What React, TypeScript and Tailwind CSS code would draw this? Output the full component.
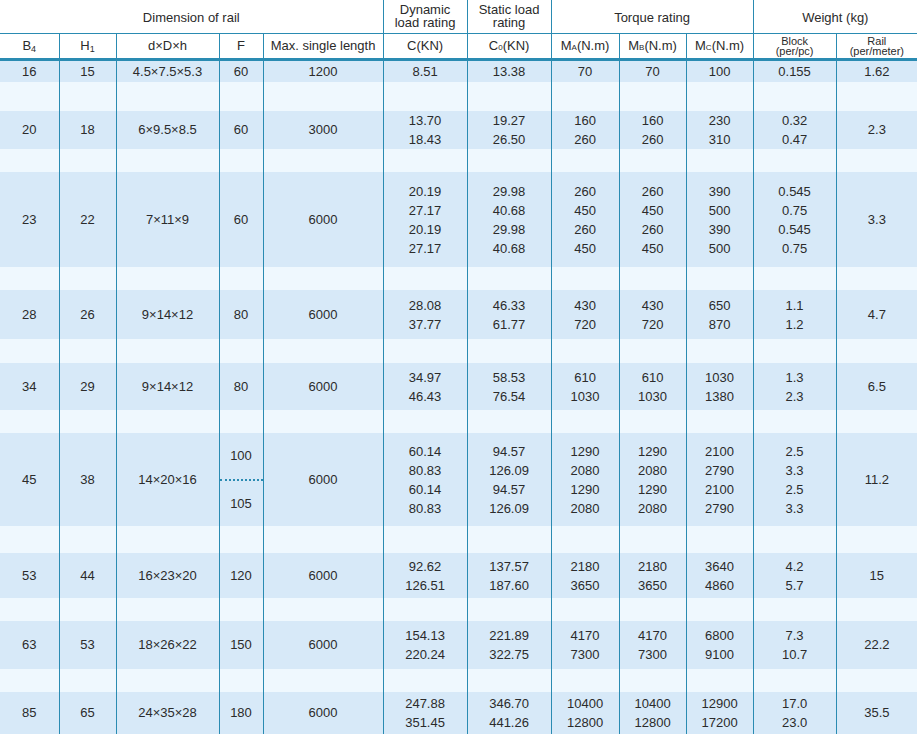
import React from "react";

type Row = {
  b: string;
  h: string;
  d: string;
  f: string[];
  len: string;
  c: string[];
  c0: string[];
  ma: string[];
  mb: string[];
  mc: string[];
  block: string[];
  rail: string;
  height: number;
  gap: number;
};

const rows: Row[] = [
  { b: "16", h: "15", d: "4.5×7.5×5.3", f: ["60"], len: "1200", c: ["8.51"], c0: ["13.38"], ma: ["70"], mb: ["70"], mc: ["100"], block: ["0.155"], rail: "1.62", height: 23, gap: 29 },
  { b: "20", h: "18", d: "6×9.5×8.5", f: ["60"], len: "3000", c: ["13.70", "18.43"], c0: ["19.27", "26.50"], ma: ["160", "260"], mb: ["160", "260"], mc: ["230", "310"], block: ["0.32", "0.47"], rail: "2.3", height: 37, gap: 23 },
  { b: "23", h: "22", d: "7×11×9", f: ["60"], len: "6000", c: ["20.19", "27.17", "20.19", "27.17"], c0: ["29.98", "40.68", "29.98", "40.68"], ma: ["260", "450", "260", "450"], mb: ["260", "450", "260", "450"], mc: ["390", "500", "390", "500"], block: ["0.545", "0.75", "0.545", "0.75"], rail: "3.3", height: 95, gap: 23 },
  { b: "28", h: "26", d: "9×14×12", f: ["80"], len: "6000", c: ["28.08", "37.77"], c0: ["46.33", "61.77"], ma: ["430", "720"], mb: ["430", "720"], mc: ["650", "870"], block: ["1.1", "1.2"], rail: "4.7", height: 49, gap: 24 },
  { b: "34", h: "29", d: "9×14×12", f: ["80"], len: "6000", c: ["34.97", "46.43"], c0: ["58.53", "76.54"], ma: ["610", "1030"], mb: ["610", "1030"], mc: ["1030", "1380"], block: ["1.3", "2.3"], rail: "6.5", height: 47, gap: 23 },
  { b: "45", h: "38", d: "14×20×16", f: ["100", "105"], len: "6000", c: ["60.14", "80.83", "60.14", "80.83"], c0: ["94.57", "126.09", "94.57", "126.09"], ma: ["1290", "2080", "1290", "2080"], mb: ["1290", "2080", "1290", "2080"], mc: ["2100", "2790", "2100", "2790"], block: ["2.5", "3.3", "2.5", "3.3"], rail: "11.2", height: 93, gap: 27 },
  { b: "53", h: "44", d: "16×23×20", f: ["120"], len: "6000", c: ["92.62", "126.51"], c0: ["137.57", "187.60"], ma: ["2180", "3650"], mb: ["2180", "3650"], mc: ["3640", "4860"], block: ["4.2", "5.7"], rail: "15", height: 45, gap: 23 },
  { b: "63", h: "53", d: "18×26×22", f: ["150"], len: "6000", c: ["154.13", "220.24"], c0: ["221.89", "322.75"], ma: ["4170", "7300"], mb: ["4170", "7300"], mc: ["6800", "9100"], block: ["7.3", "10.7"], rail: "22.2", height: 48, gap: 23 },
  { b: "85", h: "65", d: "24×35×28", f: ["180"], len: "6000", c: ["247.88", "351.45"], c0: ["346.70", "441.26"], ma: ["10400", "12800"], mb: ["10400", "12800"], mc: ["12900", "17200"], block: ["17.0", "23.0"], rail: "35.5", height: 42, gap: 0 },
];

const widths = [59, 57, 103, 44, 120, 84, 84, 68, 67, 67, 83, 81];

const cell = "border-x border-[#2a8bb2] p-0 text-center align-middle";

function Lines({ v }: { v: string[] }) {
  return (
    <div className="flex flex-col items-center leading-[19px]">
      {v.map((x, i) => (
        <span key={i}>{x}</span>
      ))}
    </div>
  );
}

function FCell({ f }: { f: string[] }) {
  if (f.length === 1) return <>{f[0]}</>;
  return (
    <div className="flex h-full flex-col">
      <div className="flex flex-1 items-center justify-center">{f[0]}</div>
      <div className="flex flex-1 items-center justify-center border-t-2 border-dotted border-[#2a8bb2]">{f[1]}</div>
    </div>
  );
}

export default function App() {
  return (
    <div className="w-[917px] overflow-hidden bg-white text-[13px] text-[#2b2b2b]" style={{ fontFamily: '"Liberation Sans", Arial, sans-serif' }}>
      <table className="w-[917px] table-fixed border-collapse border-hidden">
        <colgroup>
          {widths.map((w, i) => (
            <col key={i} style={{ width: w }} />
          ))}
        </colgroup>
        <thead>
          <tr className="h-[33px] border-b border-[#2a8bb2]">
            <th colSpan={5} className={`${cell} pt-[2px] font-normal`}>Dimension of rail</th>
            <th className={`${cell} font-normal leading-[13px]`}>Dynamic<br />load rating</th>
            <th className={`${cell} font-normal leading-[13px]`}>Static load<br />rating</th>
            <th colSpan={3} className={`${cell} pt-[2px] font-normal`}>Torque rating</th>
            <th colSpan={2} className={`${cell} pt-[2px] font-normal`}>Weight (kg)</th>
          </tr>
          <tr className="h-[26px] border-b-[3px] border-[#2a8bb2]">
            <th className={`${cell} font-normal`}>B<sub className="text-[9px]">4</sub></th>
            <th className={`${cell} font-normal`}>H<sub className="text-[9px]">1</sub></th>
            <th className={`${cell} font-normal`}>d×D×h</th>
            <th className={`${cell} font-normal`}>F</th>
            <th className={`${cell} font-normal`}>Max. single length</th>
            <th className={`${cell} font-normal`}>C(KN)</th>
            <th className={`${cell} font-normal`}>C<span className="text-[8px]">0</span>(KN)</th>
            <th className={`${cell} font-normal`}>M<span className="text-[8px]">A</span>(N.m)</th>
            <th className={`${cell} font-normal`}>M<span className="text-[8px]">B</span>(N.m)</th>
            <th className={`${cell} font-normal`}>M<span className="text-[8px]">C</span>(N.m)</th>
            <th className={`${cell} font-normal text-[11px] leading-[10px]`}>Block<br />(per/pc)</th>
            <th className={`${cell} font-normal text-[11px] leading-[10px]`}>Rail<br />(per/meter)</th>
          </tr>
        </thead>
        <tbody>
          {rows.map((r, i) => (
            <React.Fragment key={i}>
              <tr className="bg-[#d7e9f8]" style={{ height: r.height }}>
                <td className={cell}>{r.b}</td>
                <td className={cell}>{r.h}</td>
                <td className={cell}>{r.d}</td>
                <td className={`${cell} ${r.f.length > 1 ? "h-[inherit]" : ""}`} style={r.f.length > 1 ? { height: r.height } : undefined}>
                  <FCell f={r.f} />
                </td>
                <td className={cell}>{r.len}</td>
                <td className={cell}><Lines v={r.c} /></td>
                <td className={cell}><Lines v={r.c0} /></td>
                <td className={cell}><Lines v={r.ma} /></td>
                <td className={cell}><Lines v={r.mb} /></td>
                <td className={cell}><Lines v={r.mc} /></td>
                <td className={cell}><Lines v={r.block} /></td>
                <td className={cell}>{r.rail}</td>
              </tr>
              {r.gap > 0 && (
                <tr className="bg-[#eff8fe]" style={{ height: r.gap }}>
                  {widths.map((_, j) => (
                    <td key={j} className={cell}></td>
                  ))}
                </tr>
              )}
            </React.Fragment>
          ))}
        </tbody>
      </table>
    </div>
  );
}
